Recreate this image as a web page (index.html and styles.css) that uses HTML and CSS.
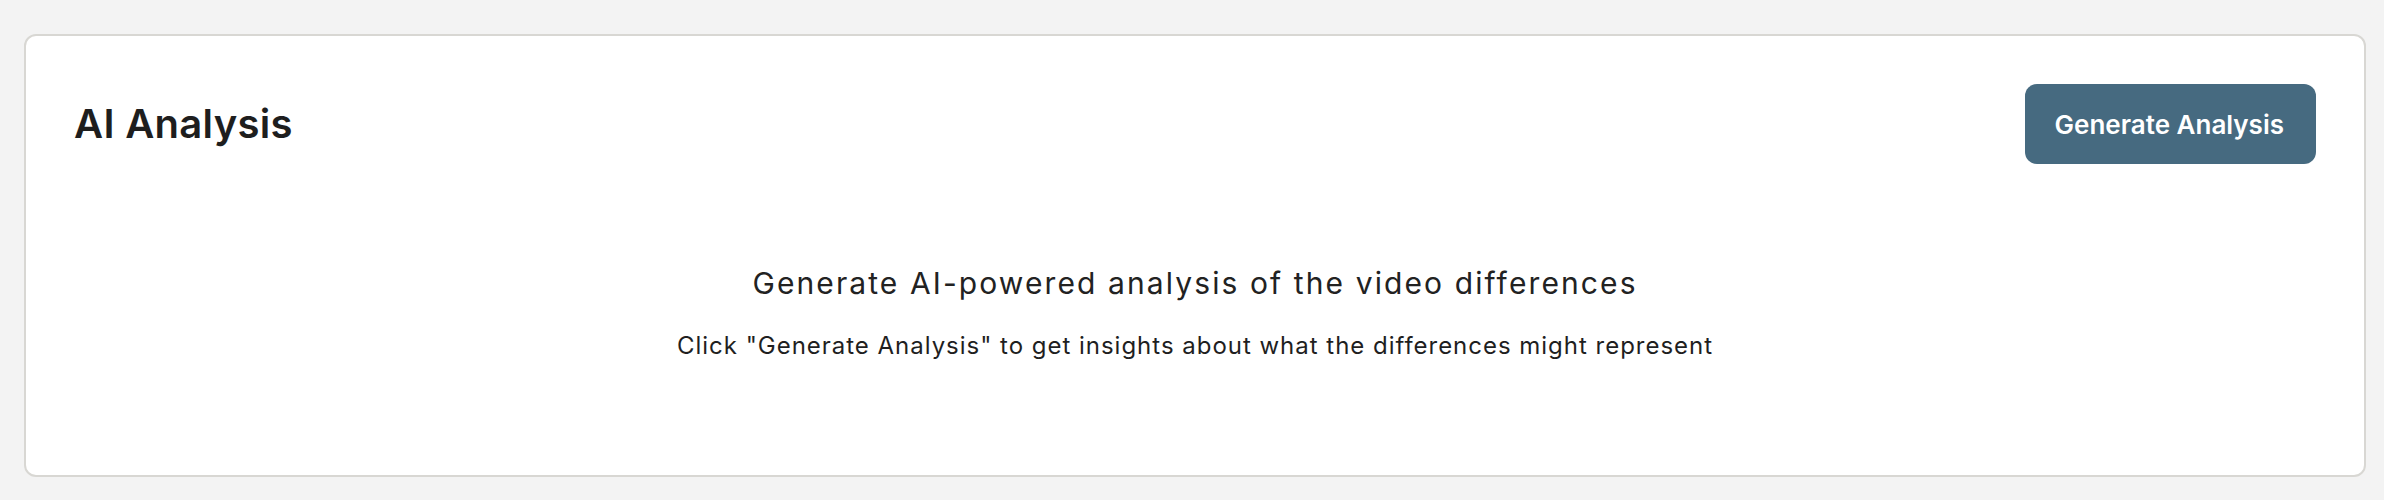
FILE: index.html
```html
<!DOCTYPE html>
<html lang="en">
<head>
<meta charset="utf-8">
<title>AI Analysis</title>
<link rel="stylesheet" href="styles.css">
</head>
<body>
<main class="page">
  <section class="card">
    <header class="card-header">
      <h2 class="card-title">AI Analysis</h2>
      <button class="btn-primary" type="button">Generate Analysis</button>
    </header>
    <div class="empty-state">
      <p class="empty-title">Generate AI-powered analysis of the video differences</p>
      <p class="empty-text">Click "Generate Analysis" to get insights about what the differences might represent</p>
    </div>
  </section>
</main>
</body>
</html>
```

FILE: styles.css
```css
html, body {
  margin: 0;
  padding: 0;
  background: #f3f3f3;
  font-family: Inter, "Noto Sans", sans-serif;
  color: #1f1f1f;
}

.page {
  padding: 34px 18px 23px 24px;
}

.card {
  box-sizing: border-box;
  width: 2342px;
  height: 443px;
  background: #ffffff;
  border: 2px solid #d8d7d3;
  border-radius: 12px;
  padding: 48px;
  display: flex;
  flex-direction: column;
}

.card-header {
  display: flex;
  align-items: center;
  justify-content: space-between;
}

.card-title {
  margin: 0;
  font-size: 40px;
  font-weight: 600;
  line-height: 1.2;
  color: #1e1e1e;
  letter-spacing: 0.3px;
}

.btn-primary {
  box-sizing: border-box;
  height: 80px;
  padding: 0 32px 0 30px;
  border: none;
  border-radius: 12px;
  background: #466a80;
  color: #ffffff;
  font-family: inherit;
  font-size: 26px;
  font-weight: 600;
  letter-spacing: 0;
}

.empty-state {
  text-align: center;
  padding-top: 97px;
}

.empty-title {
  margin: 0;
  font-size: 30px;
  line-height: 45px;
  color: #222222;
  letter-spacing: 2.1px;
}

.empty-text {
  margin: 22px 0 0;
  font-size: 24px;
  line-height: 36px;
  color: #1f1f1f;
  letter-spacing: 0.98px;
}
```
